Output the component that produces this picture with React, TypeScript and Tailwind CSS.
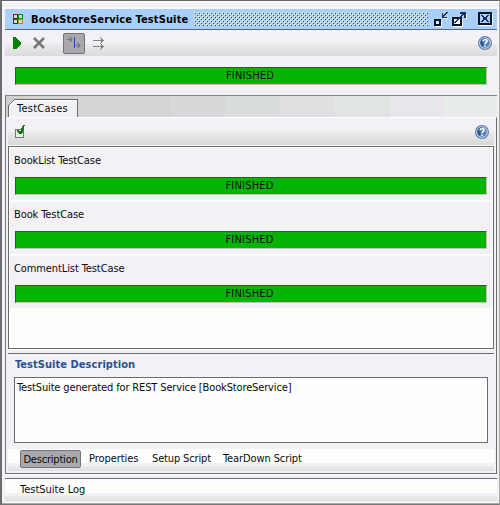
import React from "react";

function Progress() {
  return (
    <div className="mx-auto h-[18px] w-[472px] border border-t-[#2c4a78] border-l-[#2c4a78] border-r-[#c3c1c5] border-b-[#c3c1c5] bg-[#04b304] pr-[2px] text-center leading-[15px] tracking-[0.2px]">
      FINISHED
    </div>
  );
}

function Help() {
  return (
    <svg width="14" height="14" viewBox="0 0 14 14">
      <circle cx="7" cy="7" r="6.4" fill="#dfe8f4" stroke="#5f80ae" strokeWidth="1.2" />
      <circle cx="7" cy="7" r="4.9" fill="#5f86bb" />
      <path d="M2.3 7A4.6 4.6 0 0 1 6.500 2.3L5 11Q2.3 9.5 2.3 7" fill="#2f5795" />
      <path d="M5 5.3Q5.2 3.4 7.2 3.4Q9.2 3.5 9.1 5.1Q9 6 7.8 6.7Q7.1 7.1 7.1 8.2M7.1 9.5V11" fill="none" stroke="#fff" strokeWidth="1.5" />
    </svg>
  );
}

function SuiteIcon() {
  return (
    <svg width="10" height="10" shapeRendering="crispEdges" fill="#c9dcf2" strokeWidth="1">
      <rect x=".5" y=".5" width="4" height="4" stroke="#a01010" />
      <rect x="5.5" y=".5" width="4" height="4" stroke="#008a10" />
      <rect x=".5" y="5.5" width="4" height="4" stroke="#8b1512" />
      <rect x="5.5" y="5.5" width="4" height="4" stroke="#a98b28" />
    </svg>
  );
}

function Bumps() {
  return (
    <svg width="234" height="14" shapeRendering="crispEdges">
      <defs>
        <pattern id="bumps" width="4" height="4" patternUnits="userSpaceOnUse">
          <path d="M0 0h1v1h-1zM2 2h1v1h-1z" fill="#fff" />
          <path d="M1 1h1v1h-1zM3 3h1v1h-1z" fill="#24447c" />
        </pattern>
      </defs>
      <rect width="234" height="14" fill="url(#bumps)" />
    </svg>
  );
}

function WindowButtons() {
  return (
    <svg width="60" height="17" viewBox="0 0 60 17" shapeRendering="crispEdges" fill="none">
      <path d="M1 15.500h6.500v-6M19 15.500h9.500v-8M45 14.500h13.500v-12M9 7.500h5M32.500 3v5" stroke="#fff" />
      <path d="M1 9h5v5h-5z" stroke="#0b1426" strokeWidth="2" fill="#dcebfc" />
      <path d="M19 7h8v7h-8z" stroke="#0b1426" strokeWidth="2" fill="#fff" />
      <path d="M45 2h12v11h-12z" stroke="#0b1426" strokeWidth="2" fill="#abcffb" />
      <g fill="#173061">
        <path d="M8 2h1v4h4v1h-5zM12 1h2v1h-2zM11 2h2v1h-2zM10 3h2v1h-2zM9 4h2v1h-2zM8 5h2v1h-2z" />
        <path d="M26 1h6v6h-2v-4h-4zM28 3h2v1h-2zM27 4h2v1h-2zM26 5h2v1h-2zM25 6h2v1h-2zM24 7h2v1h-2zM23 8h2v1h-2zM22 9h2v1h-2zM21 10h2v1h-2zM20 11h2v1h-2z" />
        <path d="M47 4h2v1h-2zM48 5h2v1h-2zM49 6h4v3h-4zM48 9h2v1h-2zM47 10h2v1h-2zM53 4h2v1h-2zM52 5h2v1h-2zM52 9h2v1h-2zM53 10h2v1h-2z" />
      </g>
    </svg>
  );
}

function Arrow({ y }: { y: number }) {
  return <path d={`M0 ${y + 0.5}h11M8.5 ${y - 2}v5M9.5 ${y - 1}v3M7.5 ${y - 3}v1M7.5 ${y + 3}v1`} />;
}

function TestCase({ name }: { name: string }) {
  return (
    <div className="h-[52px] bg-[#f3f1f5]">
      <div className="h-[29px] pl-1 pt-[5px] leading-[16px] tracking-[-0.1px]">{name}</div>
      <div className="pr-px"><Progress /></div>
    </div>
  );
}

export default function App() {
  return (
    <div className="flex h-[505px] w-[500px] flex-col overflow-hidden border-b border-l-2 border-r border-t border-b-[#777] border-l-[#6c6c6c] border-r-[#a9a9a9] border-t-[#666] bg-[#f3f1f5] pl-[3px] font-['DejaVu_Sans_Condensed','DejaVu_Sans',sans-serif] text-[11px] whitespace-nowrap text-[#0b0b0b]">
      <div className="-ml-[3px] h-[8px] shrink-0 border-b-2 border-[#fafafc] bg-[linear-gradient(#fff_0_2px,#f3f1f5_2px)]" />
      <div className="flex h-[21px] w-[492px] shrink-0 items-start border-b border-[#566a80] bg-[#abcffb] pt-[3px]">
        <div className="ml-[8px] mt-[2px]"><SuiteIcon /></div>
        <div className="ml-[7px] w-[164px] pl-px text-[11px] leading-[15px] font-bold tracking-[0.12px] text-black">BookStoreService TestSuite</div>
        <Bumps />
        <div className="ml-[6px] -mt-[1px]"><WindowButtons /></div>
      </div>
      <div className="flex h-[26px] w-[492px] shrink-0 items-start bg-[linear-gradient(#f3f1f5_0_14px,#ebebeb_14px,#dadada_26px)]">
        <svg className="ml-[7px] mt-[7px]" width="10" height="12" shapeRendering="crispEdges"><path d="M1 0h3v1h1v1h1v1h1v1h1v1h1v3h-1v1h-1v1h-1v1h-1v1h-4z" fill="#008000" /></svg>
        <svg className="ml-[11px] mt-[7px]" width="12" height="12"><path d="M1 1L11 11M11 1L1 11" stroke="#777" strokeWidth="2.6" /></svg>
        <div className="ml-[18px] mt-[3px] h-[21px] w-[22px] rounded-[2px] border border-[#747276] bg-[#aaa8ac]">
          <svg width="20" height="19" fill="none">
            <path d="M3 5.5h5M5.500 3l2.500 2.500-2.500 2.500M11 11.5h5M13.500 9l2.500 2.500-2.500 2.500" stroke="#77757b" strokeWidth="1.2" />
            <path d="M10.500 3v11" stroke="#164ab0" shapeRendering="crispEdges" />
          </svg>
        </div>
        <svg className="ml-[8px] mt-[7px]" width="13" height="14" stroke="#858585" fill="none" shapeRendering="crispEdges"><Arrow y={3} /><Arrow y={9} /></svg>
        <div className="ml-auto mt-[6px] mr-[5px]"><Help /></div>
      </div>
      <div className="mr-[12px] ml-[10px] h-[39px] shrink-0 pt-[11px]"><Progress /></div>

      <div className="flex h-[379px] w-[492px] shrink-0 flex-col border-b border-l border-t border-b-[#6d6b6f] border-l-[#777] border-t-[#858585]">
        <div className="flex h-[21px] shrink-0 bg-[linear-gradient(90deg,#ccd0cc_0_2px,#d4d5d4_60px,#d4d4d4_165px,#dad7da_165px_219px,#dadeda_219px_274px,#e2dfe3_274px_328px,#e1e5e1_328px_384px,#e9e7eb_384px_438px,#e9ede9_438px)] pl-[2px]">
          <svg className="mt-[3px] shrink-0" width="70" height="19" shapeRendering="crispEdges">
            <path d="M0 19V6L6 0H70V19" fill="#f3f1f5" />
            <path d="M.500 19V6.500L6.500 .500H69.500V19" fill="none" stroke="#6b6b6b" />
            <path d="M1.500 19V7.500L7.500 1.500H69" fill="none" stroke="#fff" />
          </svg>
          <div className="-ml-[61px] mt-[5px] leading-[16px] tracking-[0.25px]">TestCases</div>
        </div>
        <div className="ml-[2px] flex h-[356px] flex-col border-r border-t border-r-[#6b6b6b] border-t-white pr-[2px]">
          <div className="flex h-[28px] shrink-0 items-start bg-[linear-gradient(#f3f1f5_0_14px,#ebebeb_14px,#d8d8d8_27px,#f9f9f9_27px)]">
            <svg className="ml-[7px] mt-[6px]" width="11" height="15" shapeRendering="crispEdges">
              <path d="M.500 5.500h8v8h-8v-8z" fill="#ececf1" stroke="#77777c" />
              <path d="M8 1h2v1h-1v4h-1v3h-1v1h-3v-1h-1v-1h-1v-2h2v1h2v-3h1v-2h1z" fill="#078000" />
            </svg>
            <div className="ml-auto mt-[7px] mr-[5px]"><Help /></div>
          </div>
          <div className="h-[203px] w-[486px] shrink-0 border border-[#6b6b6b] bg-[#fdfefc] pl-px pt-px pr-px">
            <div className="flex flex-col gap-[2px]">
              <TestCase name="BookList TestCase" />
              <TestCase name="Book TestCase" />
              <TestCase name="CommentList TestCase" />
            </div>
          </div>
          <div className="h-[4px] shrink-0 border-t border-white" />
          <div className="w-[486px] border-t border-[#6b6b6b]">
            <div className="h-[23px] pl-[7px] pt-[3px] leading-[15px] font-bold tracking-[0.05px] text-[#2b518c]">TestSuite Description</div>
            <div className="ml-[6px] h-[66px] w-[474px] border border-[#6b6b6b] bg-[#fdfefc] pl-[2px] pt-[2px] leading-[16px] tracking-[-0.14px]">TestSuite generated for REST Service [BookStoreService]</div>
            <div className="mt-[6px] flex h-[22px] items-start bg-[linear-gradient(#fdfefc_0_14px,#f3f1f5_14px_17px,#e9e9e9_17px,#e1e1e1)] pl-[12px] pt-px leading-[18px] tracking-[-0.05px]">
              <div className="h-[18px] w-[61px] rounded-[2px] border border-[#757377] bg-[#aaa8ac] text-center leading-[17px] tracking-[-0.2px]">Description</div>
              <div className="ml-[8px] w-[63px]">Properties</div>
              <div className="w-[71px] tracking-[-0.15px]">Setup Script</div>
              <div className="tracking-[-0.1px]">TearDown Script</div>
            </div>
          </div>
        </div>
      </div>
      <div className="h-[4px] w-[492px] shrink-0 border-t border-white" />
      <div className="h-[24px] w-[492px] shrink-0 border-t border-[#6b6b6b] bg-[linear-gradient(#fdfefc_0_14px,#f3f1f5_14px_17px,#e9e9e9_17px,#e1e1e1_22px,#f3f1f5_22px)] pl-[15px] pt-[3px] leading-[16px]">TestSuite Log</div>
      <div className="-ml-[3px] mt-auto h-px bg-[#aaa]" />
    </div>
  );
}
